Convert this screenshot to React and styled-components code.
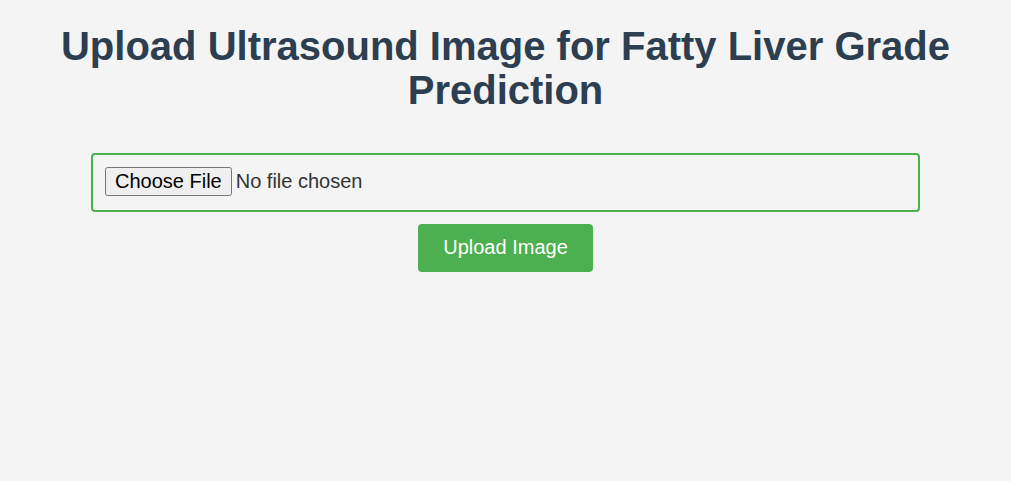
import React from "react";
import styled, { createGlobalStyle } from "styled-components";

const GlobalStyle = createGlobalStyle`
  body {
    margin: 0;
    background: #f4f4f4;
    font-family: "Liberation Sans", Arial, sans-serif;
  }
`;

const Page = styled.div`
  display: flex;
  flex-direction: column;
  align-items: center;
  padding: 20px;
`;

const Title = styled.h1`
  margin: 4px 0 41px;
  max-width: 920px;
  text-align: center;
  font-size: 40px;
  line-height: 44px;
  font-weight: bold;
  color: #2c3e50;
`;

const Form = styled.form`
  display: flex;
  flex-direction: column;
  align-items: center;
  gap: 12px;
`;

const FileInput = styled.input`
  box-sizing: border-box;
  width: 829px;
  height: 59px;
  padding: 12px;
  border: 2px solid #4caf50;
  border-radius: 4px;
  font-family: "Liberation Sans", Arial, sans-serif;
  font-size: 20px;
  color: #333;

  &::file-selector-button {
    font-family: inherit;
    font-size: 20px;
    color: #000;
    margin-right: 4px;
    padding: 1px 8px;
  }
`;

const UploadButton = styled.button`
  padding: 12px 25px 13px;
  border: none;
  border-radius: 4px;
  background: #4caf50;
  color: white;
  font-family: "Liberation Sans", Arial, sans-serif;
  font-size: 20px;
  cursor: pointer;
`;

const App = () => {
  return (
    <>
      <GlobalStyle />
      <Page>
        <Title>Upload Ultrasound Image for Fatty Liver Grade Prediction</Title>
        <Form onSubmit={(e) => e.preventDefault()}>
          <FileInput type="file" accept="image/*" />
          <UploadButton type="submit">Upload Image</UploadButton>
        </Form>
      </Page>
    </>
  );
};

export default App;
